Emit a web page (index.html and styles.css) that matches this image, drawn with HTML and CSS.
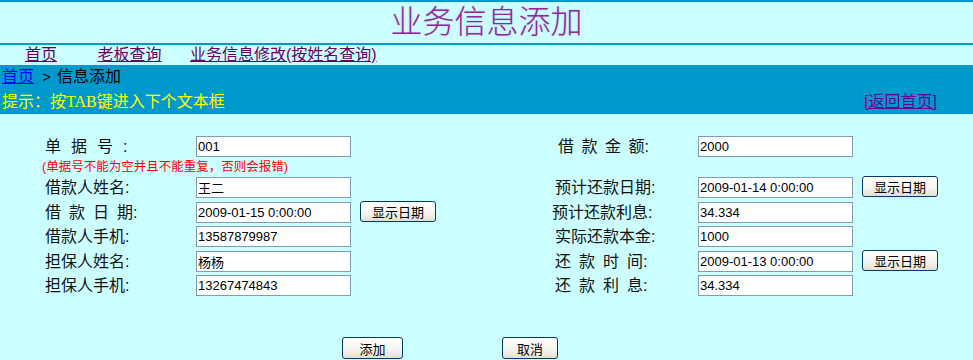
FILE: index.html
```html
<!DOCTYPE html>
<html lang="zh-CN">
<head>
  <meta charset="UTF-8" />
  <title>业务信息添加</title>
  <link rel="stylesheet" href="styles.css">
</head>
<body>

  <!-- Title -->
  <div class="top">
    <h1>业务信息添加</h1>
  </div>

  <!-- Navigation -->
  <div class="nav">
    <a href="#" class="nav-home">首页</a>
    <a href="#" class="nav-boss">老板查询</a>
    <a href="#">业务信息修改(按姓名查询)</a>
  </div>

  <!-- Location / tip bar -->
  <div class="bar">
    <div class="crumb"><a href="#">首页</a> <span class="gt">&gt;</span> 信息添加</div>
    <div class="tip">
      <span>提示：按<span class="serif">TAB</span>键进入下个文本框</span>
      <a href="#" class="back">[返回首页]</a>
    </div>
  </div>

  <!-- Form -->
  <form class="form">
    <div class="row first">
      <label class="l-lbl"><span class="sp10">单据</span><span class="sp10">号</span>:</label>
      <input class="txt l-in" type="text" value="001">
      <label class="r-lbl pad3"><span class="sp7">借款金</span>额:</label>
      <input class="txt r-in" type="text" value="2000">
    </div>
    <div class="note">(单据号不能为空并且不能重复，否则会报错)</div>
    <div class="row">
      <label class="l-lbl">借款人姓名:</label>
      <input class="txt l-in" type="text" value="王二">
      <label class="r-lbl">预计还款日期:</label>
      <input class="txt r-in" type="text" value="2009-01-14 0:00:00">
      <button type="button" class="btn r-btn">显示日期</button>
    </div>
    <div class="row">
      <label class="l-lbl"><span class="sp8">借款日</span>期:</label>
      <input class="txt l-in" type="text" value="2009-01-15 0:00:00">
      <button type="button" class="btn l-btn">显示日期</button>
      <label class="r-lbl shift-l">预计还款利息:</label>
      <input class="txt r-in shift-r" type="text" value="34.334">
    </div>
    <div class="row">
      <label class="l-lbl">借款人手机:</label>
      <input class="txt l-in" type="text" value="13587879987">
      <label class="r-lbl">实际还款本金:</label>
      <input class="txt r-in" type="text" value="1000">
    </div>
    <div class="row">
      <label class="l-lbl">担保人姓名:</label>
      <input class="txt l-in" type="text" value="杨杨">
      <label class="r-lbl"><span class="sp8">还款时</span>间:</label>
      <input class="txt r-in" type="text" value="2009-01-13 0:00:00">
      <button type="button" class="btn r-btn">显示日期</button>
    </div>
    <div class="row">
      <label class="l-lbl">担保人手机:</label>
      <input class="txt l-in" type="text" value="13267474843">
      <label class="r-lbl"><span class="sp8">还款利</span>息:</label>
      <input class="txt r-in" type="text" value="34.334">
    </div>

    <div class="actions">
      <button type="button" class="btn btn-add">添加</button>
      <button type="button" class="btn btn-cancel">取消</button>
    </div>
  </form>

</body>
</html>
```

FILE: styles.css
```css
body {
  margin: 0;
  padding: 0;
  background-color: #ccffff;
  color: #000;
  font-family: "Liberation Sans", "Noto Sans CJK SC", sans-serif;
  font-size: 16px;
}

/* Title */
.top {
  height: 41px;
  border-top: 2px solid #0099cc;
  border-bottom: 2px solid #0099cc;
  text-align: center;
}

.top h1 {
  margin: 0;
  font-size: 32px;
  line-height: 41px;
  font-weight: 300;
  color: #8e2a96;
  text-shadow: 0 0 2px #c8bcf2;
}

/* Navigation */
.nav {
  height: 20px;
  line-height: 20px;
  padding-left: 25px;
}

.nav a {
  color: #660066;
}

.nav-home {
  margin-right: 36px;
}

.nav-boss {
  margin-right: 24px;
}

/* Bar */
.bar {
  background-color: #0099cc;
  height: 49px;
}

.crumb {
  height: 24px;
  line-height: 24px;
  padding-left: 2px;
}

.crumb a {
  color: #0000ff;
}

.crumb .gt {
  margin: 0 2px 0 4px;
  font-size: 14px;
}

.tip {
  display: flex;
  justify-content: space-between;
  height: 25px;
  line-height: 25px;
  padding: 0 36px 0 2px;
  color: #ffff00;
}

.serif {
  font-family: "Liberation Serif", serif;
}

.back {
  color: #660099;
}

/* Form */
.form {
  padding: 22px 0 0 45px;
  margin: 0;
}

.row {
  display: grid;
  grid-template-columns: 151px 155px 85px 119px 143px 155px 85px;
  align-items: start;
  height: 24.5px;
}

.row.first {
  height: 21px;
}

.l-lbl { grid-column: 1; }
.l-in { grid-column: 2; }
.l-btn { grid-column: 3; }
.r-lbl { grid-column: 5; }
.r-in { grid-column: 6; }
.r-btn { grid-column: 7; }

.l-lbl,
.r-lbl {
  height: 21px;
  line-height: 21px;
  font-size: 16px;
  white-space: nowrap;
  color: #111;
}

.sp10 {
  letter-spacing: 10px;
}

.sp8 {
  letter-spacing: 8px;
}

.sp7 {
  letter-spacing: 7.5px;
}

.pad3 {
  padding-left: 3px;
}

.shift-l {
  margin-left: -3px;
}

.shift-r {
  margin-left: 2px;
}

.txt {
  box-sizing: border-box;
  width: 155px;
  height: 21px;
  margin: 0;
  padding: 0 1px;
  border: 1px solid #7f9db9;
  background-color: white;
  font-family: "Liberation Sans", "Noto Sans CJK SC", sans-serif;
  font-size: 13px;
  color: #000;
}

.note {
  height: 20px;
  line-height: 20px;
  margin-left: -3px;
  color: #ff0000;
  font-size: 12.5px;
}

.btn {
  box-sizing: border-box;
  height: 21px;
  padding: 0;
  border: 1px solid #003c74;
  border-radius: 3px;
  background: linear-gradient(#ffffff 0%, #f6f5f0 55%, #e3dfd0 100%);
  font-family: "Liberation Sans", "Noto Sans CJK SC", sans-serif;
  font-size: 13px;
  color: #000;
  cursor: pointer;
}

.l-btn,
.r-btn {
  width: 76px;
  margin: -1px 0 0 9px;
}

.actions {
  display: flex;
  gap: 99px;
  padding: 37.5px 0 0 297px;
}

.btn-add {
  width: 61px;
  height: 22px;
}

.btn-cancel {
  width: 56px;
  height: 22px;
}
```
